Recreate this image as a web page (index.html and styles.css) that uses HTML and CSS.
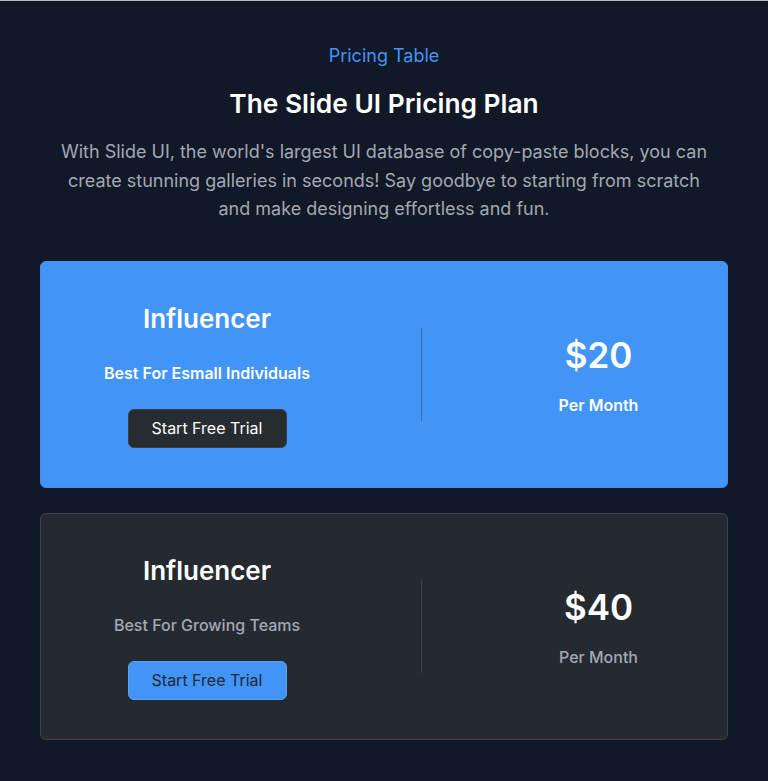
FILE: index.html
```html
<!DOCTYPE html>
<html lang="en">
<head>
<meta charset="utf-8">
<title>Pricing Table</title>
<link rel="stylesheet" href="styles.css">
</head>
<body>
<section class="pricing">
  <header class="intro">
    <p class="eyebrow">Pricing Table</p>
    <h1 class="title">The Slide UI Pricing Plan</h1>
    <p class="lead">With Slide UI, the world's largest UI database of copy-paste blocks, you can create stunning galleries in seconds! Say goodbye to starting from scratch and make designing effortless and fun.</p>
  </header>
  <div class="plans">
    <article class="plan plan-featured">
      <div class="plan-info">
        <h2 class="plan-name">Influencer</h2>
        <p class="plan-desc">Best For Esmall Individuals</p>
        <button class="plan-btn">Start Free Trial</button>
      </div>
      <div class="plan-divider"></div>
      <div class="plan-price">
        <p class="price">$20</p>
        <p class="period">Per Month</p>
      </div>
    </article>
    <article class="plan plan-default">
      <div class="plan-info">
        <h2 class="plan-name">Influencer</h2>
        <p class="plan-desc">Best For Growing Teams</p>
        <button class="plan-btn">Start Free Trial</button>
      </div>
      <div class="plan-divider"></div>
      <div class="plan-price">
        <p class="price">$40</p>
        <p class="period">Per Month</p>
      </div>
    </article>
  </div>
</section>
</body>
</html>
```
FILE: styles.css
```css
* { box-sizing: border-box; }
html, body { margin: 0; padding: 0; }
body {
  background: #111827;
  font-family: Inter, "Noto Sans", sans-serif;
  color: #fff;
  border-top: 1px solid #b8bcc4;
  min-height: 781px;
}
.pricing { padding: 41px 40px 40px; }
.intro { text-align: center; max-width: 652px; margin: 0 auto; }
.eyebrow {
  margin: 0;
  color: #4294f6;
  font-size: 18px;
  line-height: 28px;
}
.title {
  margin: 18px 0 0;
  font-size: 26.3px;
  line-height: 32px;
  font-weight: 600;
  color: #fff;
}
.lead {
  margin: 18px 0 0;
  font-size: 18px;
  line-height: 28.5px;
  color: #a3a8b1;
}
.plans {
  margin-top: 37px;
  display: flex;
  flex-direction: column;
  gap: 25px;
}
.plan {
  display: grid;
  grid-template-columns: 332px 1px 1fr;
  column-gap: 48px;
  align-items: center;
  padding: 40px 0 39px;
  border-radius: 6px;
  border: 1px solid transparent;
}
.plan-featured { background: #4294f6; border-color: #4a8fe0; }
.plan-default { background: #252a31; border-color: #3c424b; }
.plan-info {
  display: flex;
  flex-direction: column;
  align-items: center;
  text-align: center;
}
.plan-name {
  margin: 0;
  font-size: 26px;
  line-height: 34px;
  font-weight: 600;
}
.plan-desc {
  margin: 25px 0 0;
  font-size: 16px;
  line-height: 24px;
  font-weight: 600;
}
.plan-default .plan-desc { color: #a3a8b1; font-weight: 500; }
.plan-btn {
  margin-top: 24px;
  width: 159px;
  height: 39px;
  border-radius: 6px;
  font-family: inherit;
  font-size: 16px;
  cursor: pointer;
}
.plan-featured .plan-btn { background: #272c31; color: #fff; border: 1px solid #3a4047; }
.plan-default .plan-btn { background: #4294f6; color: #1f2937; border: 1px solid #5aa0f5; }
.plan-divider { width: 1px; height: 93px; }
.plan-featured .plan-divider { background: #3a6fae; }
.plan-default .plan-divider { background: #3c424b; }
.plan-price { text-align: center; }
.price {
  margin: 0;
  font-size: 35px;
  line-height: 44px;
  font-weight: 600;
}
.period {
  margin: 16px 0 0;
  font-size: 16px;
  line-height: 24px;
  font-weight: 600;
}
.plan-default .period { color: #a3a8b1; font-weight: 500; }
```
